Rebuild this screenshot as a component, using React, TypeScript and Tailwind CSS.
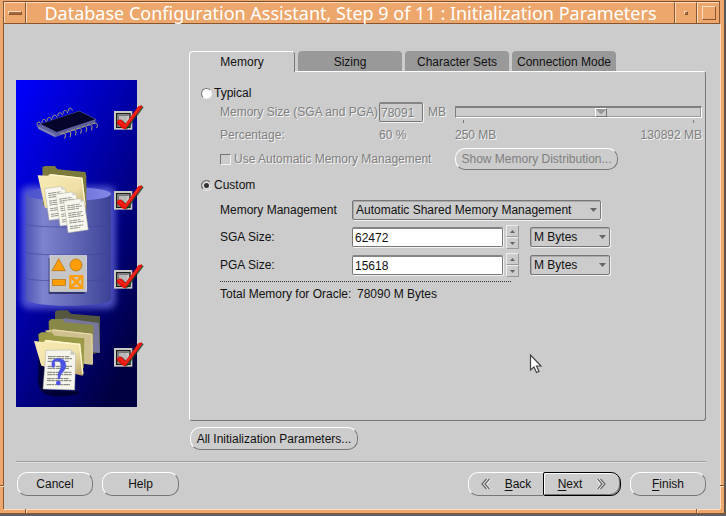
import { useState } from "react";
import type { ReactNode } from "react";

const etched = "text-[#808080] [text-shadow:1px_1px_0_#f4f4f4]";
const pill =
  "flex items-center justify-center rounded-[10px] border border-t-white border-l-white border-r-[#777] border-b-[#777]";
const sunken =
  "h-5 rounded-[2px] border border-[#777] border-t-2 border-t-[#858585] shadow-[1px_1px_0_#f2f2f2] outline-none";

function TitleBar() {
  return (
    <header className="flex h-6 border-t border-[#eda76d] bg-[#eda76d] pr-[6px] pl-[3px]">
      <div className="flex min-w-0 flex-1 border border-t-[#7c4b2c] border-r-[#8a5630] border-b-[#8a5630] border-l-[#8a5630]">
        <button
          type="button"
          aria-label="Window menu"
          className="flex w-[22px] items-center justify-center border-t border-l border-t-[#ffdcc0] border-l-[#ffdcc0] border-r border-r-[#8a5630]"
        >
          <span className="h-1 w-[14px] border border-t-[#ffdcc0] border-l-[#ffdcc0] border-r-[#8a5630] border-b-[#8a5630] bg-[#a5683f]" />
        </button>
        <h1 className="min-w-0 flex-1 border-t border-r border-l border-t-[#ffdcc0] border-r-[#8a5630] border-l-[#ffdcc0] text-center font-['Noto_Sans','Open_Sans',sans-serif] text-lg leading-5 font-normal whitespace-nowrap text-white">
          Database Configuration Assistant, Step 9 of 11 : Initialization Parameters
        </h1>
        <button
          type="button"
          aria-label="Minimize"
          className="flex w-[22px] items-center justify-center border-t border-r border-l border-t-[#ffdcc0] border-r-[#8a5630] border-l-[#ffdcc0]"
        >
          <span className="size-1 border border-t-[#ffdcc0] border-l-[#ffdcc0] border-r-[#8a5630] border-b-[#8a5630] bg-[#a5683f]" />
        </button>
        <button
          type="button"
          aria-label="Maximize"
          className="flex w-[22px] items-center justify-center border-t border-l border-t-[#ffdcc0] border-l-[#ffdcc0]"
        >
          <span className="size-[14px] border border-t-[#ffdcc0] border-l-[#ffdcc0] border-r-[#8a5630] border-b-[#8a5630]" />
        </button>
      </div>
    </header>
  );
}

function CheckMark({ x, y }: { x: number; y: number }) {
  return (
    <g transform={`translate(${x} ${y}) scale(.33333)`}>
      <rect width="55" height="56" fill="#cacac4" />
      <rect x="8" y="8" width="40" height="41" fill="#b9b9b9" stroke="#1c1c1c" strokeWidth="4" />
      <path d="M13 44V13h31" fill="none" stroke="#777" strokeWidth="4" />
      <path d="M42 15v28H15" fill="none" stroke="#d8d8d8" strokeWidth="3" />
      <path d="M12 32l12-5 13 12 38-52 8-3 6 5-46 62-8 5-27-17z" fill="#12401c" opacity=".8" />
      <path d="M8 31l10-6 5 2 11 12L73-14l10-3 2 5-44 58-7 9-7-2-17-14z" fill="#e8150f" />
      <path d="M15 31l19 15 42-56" fill="none" stroke="#ff4630" strokeWidth="2" />
    </g>
  );
}

function Page({ x, y }: { x: number; y: number }) {
  return (
    <g transform={`translate(${x} ${y}) rotate(-8)`}>
      <path d="M0 0h50l11 9v87H0z" fill="#f7f7ef" stroke="#b6b4a0" strokeWidth="1.5" />
      <path d="M50 0v10h11z" fill="#d2d0c2" />
      <path
        d="M8 16h38M8 22h44M8 28h34M8 39h43M8 45h38M8 51h44M8 62h34M8 68h43M8 79h40M8 85h30"
        stroke="#85857c"
        strokeWidth="2.5"
        strokeDasharray="9 1 14 2"
      />
    </g>
  );
}

function Illustration() {
  return (
    <svg
      width="128"
      height="327"
      viewBox="0 0 128 327"
      role="img"
      aria-label="Database setup progress"
      className="block shrink-0"
    >
      <defs>
        <linearGradient id="sky" x1="0" y1="0" x2=".75" y2="1">
          <stop offset="0" stopColor="#0000ff" />
          <stop offset=".4" stopColor="#0000b8" />
          <stop offset="1" stopColor="#000040" />
        </linearGradient>
        <linearGradient id="drum" x1="0" x2="1" y1="0" y2="0">
          <stop offset="0" stopColor="#5055b8" />
          <stop offset=".2" stopColor="#7d83cc" />
          <stop offset=".6" stopColor="#6066b4" />
          <stop offset="1" stopColor="#3c4196" />
        </linearGradient>
        <linearGradient id="lid" x1="0" x2="1">
          <stop offset="0" stopColor="#4a50cc" />
          <stop offset="1" stopColor="#8488e6" />
        </linearGradient>
        <linearGradient id="cream" x1="0" x2="1" y1="0" y2="1">
          <stop offset="0" stopColor="#f8ebb4" />
          <stop offset=".6" stopColor="#f0e0a8" />
          <stop offset="1" stopColor="#b69d64" />
        </linearGradient>
        <filter id="haze" x="-30%" y="-30%" width="160%" height="160%">
          <feGaussianBlur stdDeviation="3" />
        </filter>
        <clipPath id="frame">
          <rect width="121" height="327" />
        </clipPath>
      </defs>
      <g clipPath="url(#frame)">
        <rect width="121" height="327" fill="url(#sky)" />
        <rect x="5" y="106" width="95" height="123" rx="8" fill="#6a70e0" opacity=".7" filter="url(#haze)" />
        <path d="M10 114v105c0 9 85 9 85 0V114z" fill="url(#drum)" />
        <ellipse cx="52.5" cy="114" rx="42.5" ry="7" fill="url(#lid)" />
        <path
          d="M10 144c0 4 85 4 85 0M10 172c0 4 85 4 85 0M10 198c0 4 85 4 85 0"
          fill="none"
          stroke="#3f4499"
          opacity=".6"
        />
      </g>

      <g transform="translate(-6 -5) scale(.33333)">
        <path
          d="M82 152c-4-14 10-14 12-2m2-6c-2-13 11-14 13-3m3-4c-2-12 11-13 13-2m3-5c-2-12 11-13 13-2m3-5c-2-12 11-13 13-2m3-5c-2-12 11-13 13-2m3-5c-2-12 9-13 11-2"
          fill="none"
          stroke="#a9a470"
          strokeWidth="3"
        />
        <path d="M80 151l128-44 50 25-3 13-120 42-49-25z" fill="#5d5f9c" />
        <path d="M92 147l116-38 48 24-116 38z" fill="#05052c" />
        <path d="M82 153l54 26v7l-50-24z" fill="#8083bd" />
        <path
          d="M151 177c14-7 18 0 13 14m3-19c14-7 18 0 13 14m3-19c14-7 18 0 13 14m3-19c14-7 18 0 13 14m3-19c14-7 18 0 13 14m3-19c14-7 18 0 13 14m3-19c14-7 18 0 13 12"
          fill="none"
          stroke="#b5ae72"
          strokeWidth="3"
        />

        <path d="M97 277l8-4h30l7 10 84 8 3 12v102l-130-16z" fill="#7c7b3c" />
        <path d="M83 301l30 1 7-5 97 11 11 88-5 15-118-13z" fill="url(#cream)" />
        <path d="M120 299l96 11 9 80" fill="none" stroke="#fff6d4" strokeWidth="4" />
        <Page x={104} y={341} />
        <Page x={137} y={358} />
        <Page x={161} y={378} />
      </g>

      <g transform="translate(-6 160) scale(.33333)">
        <rect x="116" y="54" width="108" height="108" fill="#1c1f50" opacity=".7" />
        <rect x="120" y="47" width="110" height="107" fill="#c6c6c6" stroke="#e8e8e8" strokeWidth="2" />
        <path d="M126 92l20-36 20 36z" fill="#ff9d09" stroke="#b66b00" strokeWidth="2" />
        <circle cx="198" cy="75" r="18" fill="#ff9d09" stroke="#b66b00" strokeWidth="2" />
        <rect x="127" y="119" width="40" height="17" fill="#ff9d09" stroke="#b66b00" strokeWidth="2" />
        <rect x="181" y="108" width="36" height="36" fill="#d0c8b8" stroke="#ff9d09" strokeWidth="6" />
        <path d="M181 108l36 36m0-36l-36 36" fill="none" stroke="#ff9d09" strokeWidth="8" />

        <path d="M85 350l20-30v130l100 4v8c-80 16-130 10-120-60z" fill="#00001c" opacity=".7" />
        <path d="M135 215l8-4h30l10 10 87 8v108l-20 5-115-100z" fill="#55563f" />
        <path d="M142 240l25-5 99 14 4 90-24-4z" fill="#77779d" />
        <path d="M116 244l8-7h32l9 10 86 8-3 90-130-10z" fill="#878747" />
        <path d="M104 272l25-4 117 13 2 94-28-4z" fill="#cfc08f" />
        <path d="M130 270l116 13 1 88" fill="none" stroke="#eee0b1" strokeWidth="3" />
        <path d="M85 283l9-6h31l8 10 90 8-2 90-130-15z" fill="#9b9b48" />
        <path d="M72 303l28 3 8-7 102 12 11 90-3 6-124-30z" fill="url(#cream)" />
        <path d="M106 303l103 10 9 88" fill="none" stroke="#fff8cd" strokeWidth="4" />
        <path d="M108 331l75-1 14 14-3 106-95-3z" fill="#f5f5ec" stroke="#aaa" strokeWidth="1.5" />
        <path d="M183 330l-2 14h16z" fill="#cccabe" />
        <path
          d="M114 350h65M114 356h72M113 364h63M113 379h73M113 385h65M112 397h72M112 404h74M111 416h66M111 422h74M110 434h70"
          stroke="#77776f"
          strokeWidth="3"
          strokeDasharray="14 1 8 2"
        />
        <path
          d="M127 380c-5-20 6-24 19-24 17 0 22 11 21 22-1 18-18 18-17 38h-5c-4-22 9-24 8-39 0-10-4-15-11-15-8 0-9 5-8 10 2 9-5 13-7 8z"
          fill="#4a52e4"
          stroke="#4a52e4"
          strokeWidth="2"
        />
        <circle cx="145" cy="429" r="7" fill="#4a52e4" />
      </g>
      <CheckMark x={98} y={31} />
      <CheckMark x={98} y={111} />
      <CheckMark x={98} y={190} />
      <CheckMark x={98} y={268} />
    </svg>
  );
}

function Combo({ id, label, options, width }: { id: string; label?: string; options: string[]; width: string }) {
  return (
    <div className={`relative ${width}`}>
      <select
        id={id}
        aria-label={label}
        className="block h-5 w-full appearance-none rounded-[2px] border border-[#777] bg-[#ccc] pr-5 pl-[3px] leading-4 shadow-[1px_1px_0_#f2f2f2,inset_1px_1px_0_#aaa] outline-none"
      >
        {options.map((o) => (
          <option key={o}>{o}</option>
        ))}
      </select>
      <svg className="pointer-events-none absolute top-2 right-1 h-1 w-[7px]" viewBox="0 0 7 4" aria-hidden="true">
        <path d="M0 0h7L3.500 4z" fill="#666" />
      </svg>
    </div>
  );
}

function Spinner({ label }: { label: string }) {
  const half =
    "flex flex-1 items-center justify-center border border-t-[#eee] border-l-[#eee] border-r-[#999] border-b-[#999]";
  return (
    <div className="ml-[3px] flex h-6 w-[13px] flex-col">
      <button type="button" aria-label={`Increase ${label}`} className={half}>
        <svg width="5" height="3" viewBox="0 0 5 3">
          <path d="M0 3h5L2.500 0z" fill="#666" />
        </svg>
      </button>
      <button type="button" aria-label={`Decrease ${label}`} className={half}>
        <svg width="5" height="3" viewBox="0 0 5 3">
          <path d="M0 0h5L2.500 3z" fill="#666" />
        </svg>
      </button>
    </div>
  );
}

function SizeRow({ id, label, value }: { id: string; label: string; value: string }) {
  return (
    <div className="flex h-7 items-center">
      <label htmlFor={id} className="w-[132px]">
        {label}
      </label>
      <input id={id} defaultValue={value} className={`${sunken} w-[151px] bg-white px-[2px]`} />
      <Spinner label={label} />
      <div className="ml-[11px]">
        <Combo id={`${id}-unit`} label={`${label} unit`} options={["M Bytes", "G Bytes"]} width="w-20" />
      </div>
    </div>
  );
}

function ModeRadio({
  label,
  height,
  checked,
  onChange,
}: {
  label: string;
  height: string;
  checked: boolean;
  onChange: () => void;
}) {
  return (
    <label className={`flex items-center gap-[2px] pl-[11px] ${height}`}>
      <input
        type="radio"
        name="mode"
        checked={checked}
        onChange={onChange}
        className="size-[11px] appearance-none rounded-full border border-t-[#777] border-l-[#777] border-r-[#eee] border-b-[#eee] bg-white checked:bg-[#333] checked:shadow-[inset_0_0_0_2px_#ddd]"
      />
      {label}
    </label>
  );
}

function MemoryPanel() {
  const [mode, setMode] = useState("custom");
  return (
    <section
      role="tabpanel"
      aria-label="Memory"
      className="min-h-0 flex-1 rounded-b-[3px] rounded-tr-[3px] border border-t-white border-l-white border-r-[#777] border-b-[#777] pt-3"
    >
      <ModeRadio label="Typical" height="h-[18px]" checked={mode === "typical"} onChange={() => setMode("typical")} />
      <div className={`flex pr-[3px] pl-[30px] ${etched}`}>
        <div className="w-[235px] shrink-0">
          <div className="flex h-5 items-center">
            <label htmlFor="total" className="w-[159px] whitespace-nowrap">
              Memory Size (SGA and PGA):
            </label>
            <input
              id="total"
              disabled
              defaultValue="78091"
              className={`${sunken} w-11 bg-[#ccc] px-px [text-shadow:1px_1px_0_#f4f4f4]`}
            />
            <span className="ml-[5px]">MB</span>
          </div>
          <div className="flex h-[26px] items-center">
            <span className="w-[159px]">Percentage:</span>
            <span>60 %</span>
          </div>
        </div>
        <div className="min-w-0 flex-1 pt-1">
          <input
            type="range"
            aria-label="Memory size"
            disabled
            min={250}
            max={130892}
            defaultValue={78091}
            className="block h-3 w-full appearance-none border border-t-2 border-t-[#808080] border-l-[#808080] border-r-white border-b-white bg-[#ccc] shadow-[inset_-1px_-1px_0_#999] [&::-webkit-slider-thumb]:h-[9px] [&::-webkit-slider-thumb]:w-3 [&::-webkit-slider-thumb]:appearance-none [&::-webkit-slider-thumb]:border [&::-webkit-slider-thumb]:border-t-white [&::-webkit-slider-thumb]:border-r-[#777] [&::-webkit-slider-thumb]:border-b-[#777] [&::-webkit-slider-thumb]:border-l-white [&::-webkit-slider-thumb]:bg-[conic-gradient(from_-45deg_at_50%_80%,#999_90deg,#ccc_0)]"
          />
          <div className="mt-[2px] flex h-[3px] justify-between px-2">
            <span className="w-px bg-[#777]" />
            <span className="w-px bg-[#777]" />
          </div>
          <div className="flex h-6 items-center justify-between whitespace-nowrap">
            <span>250 MB</span>
            <span>130892 MB</span>
          </div>
        </div>
      </div>
      <div className={`flex h-[22px] items-center pl-[30px] ${etched}`}>
        <label className="flex w-[235px] items-center gap-[3px] whitespace-nowrap">
          <input
            type="checkbox"
            disabled
            className="size-[11px] shrink-0 appearance-none border border-t-[#777] border-l-[#777] border-r-[#f2f2f2] border-b-[#f2f2f2]"
          />
          Use Automatic Memory Management
        </label>
        <button type="button" disabled className={`${pill} h-[22px] w-[163px] whitespace-nowrap`}>
          Show Memory Distribution...
        </button>
      </div>
      <ModeRadio label="Custom" height="h-[30px]" checked={mode === "custom"} onChange={() => setMode("custom")} />
      <div className="pl-[30px]">
        <div className="mb-[3px] flex h-5 items-center">
          <label htmlFor="management" className="w-[132px]">
            Memory Management
          </label>
          <Combo
            id="management"
            options={["Automatic Shared Memory Management", "Manual Shared Memory Management"]}
            width="w-[249px]"
          />
        </div>
        <SizeRow id="sga" label="SGA Size:" value="62472" />
        <SizeRow id="pga" label="PGA Size:" value="15618" />
        <hr className="mt-[2px] w-[291px] border-0 border-t border-dotted border-[#333]" />
        <p className="flex h-6 items-center gap-[5px]">
          <span className="w-[132px]">Total Memory for Oracle:</span>
          <span>78090 M Bytes</span>
        </p>
      </div>
    </section>
  );
}

function Tabs() {
  const base = "h-5 w-[104px] whitespace-nowrap pt-[2px]";
  return (
    <div role="tablist" className="flex gap-[3px]">
      <button
        type="button"
        role="tab"
        aria-selected="true"
        className="relative z-10 -mb-px h-[21px] w-[106px] rounded-t-[4px] border border-b-0 border-t-white border-l-white border-r-[#777] bg-[#ccc]"
      >
        Memory
      </button>
      {["Sizing", "Character Sets", "Connection Mode"].map((t) => (
        <button key={t} type="button" role="tab" aria-selected="false" className={`${base} rounded-t-[4px] bg-[#999]`}>
          {t}
        </button>
      ))}
    </div>
  );
}

function Chevrons({ flip }: { flip?: boolean }) {
  return (
    <svg
      width="10"
      height="12"
      viewBox="0 0 10 12"
      fill="none"
      aria-hidden="true"
      className={flip ? "-scale-x-100" : ""}
    >
      <path d="M6.500 1.500L2.500 6.500l4 4.500M9.500 1.500L5.500 6.500l4 4.500" stroke="#fff" />
      <path d="M5.500 1L1 6l4.500 5M8.500 1L4 6l4.500 5" stroke="#6a6a6a" strokeWidth="1.200" />
    </svg>
  );
}

function Mnemonic({ children }: { children: string }) {
  return (
    <span>
      <span className="underline underline-offset-2">{children[0]}</span>
      {children.slice(1)}
    </span>
  );
}

function NavButton({ className, children }: { className: string; children: ReactNode }) {
  return (
    <button type="button" className={`h-6 ${className}`}>
      {children}
    </button>
  );
}

function Cursor() {
  return (
    <svg className="pointer-events-none absolute top-[354px] left-[529px]" width="14" height="20" viewBox="0 0 14 20" aria-hidden="true">
      <path d="M1.500 1v15l3.500-3 2.500 5.500 2.500-1-2.500-5.500h4.500z" fill="#fff" stroke="#444" strokeWidth="1.200" />
    </svg>
  );
}

export default function App() {
  return (
    <div className="relative flex min-h-screen w-full flex-col bg-[#eda76d] font-['Liberation_Sans',Arial,sans-serif] text-xs text-[#111]">
      <TitleBar />
      <main className="flex flex-1 flex-col border-r-[6px] border-b-[7px] border-l-4 border-[#eda76d] bg-[#ccc]">
        <div className="flex flex-1 flex-col pt-[27px] pr-[14px] pb-[13px] pl-3 shadow-[-1px_0_0_#8a5630,1px_0_0_#ffdcc0,0_1px_0_#ffdcc0]">
          <div className="flex flex-1">
            <div className="w-[173px] shrink-0 pt-[29px]">
              <Illustration />
            </div>
            <div className="flex min-w-0 flex-1 flex-col">
              <Tabs />
              <MemoryPanel />
              <button type="button" className={`${pill} mt-[6px] ml-px h-[23px] w-[168px] whitespace-nowrap`}>
                All Initialization Parameters...
              </button>
            </div>
          </div>
          <hr className="mt-[11px] h-[2px] border-0 border-t border-[#a0a0a0] bg-[#ddd]" />
          <footer className="mt-[9px] flex justify-between">
            <div className="flex gap-[9px] pl-px">
              <NavButton className={`${pill} w-[76px]`}>Cancel</NavButton>
              <NavButton className={`${pill} w-[77px]`}>Help</NavButton>
            </div>
            <div className="flex">
              <NavButton className={`${pill} w-[75px] gap-[14px] rounded-r-none border-r-0`}>
                <Chevrons />
                <Mnemonic>Back</Mnemonic>
              </NavButton>
              <NavButton className="flex w-[78px] items-center justify-center gap-[14px] rounded-l-[2px] rounded-r-[10px] border border-black shadow-[inset_1px_1px_0_#fff,inset_-1px_-1px_0_#777]">
                <Mnemonic>Next</Mnemonic>
                <Chevrons flip />
              </NavButton>
              <NavButton className={`${pill} ml-[9px] w-[76px]`}>
                <Mnemonic>Finish</Mnemonic>
              </NavButton>
            </div>
          </footer>
        </div>
      </main>
      <div className="pointer-events-none absolute inset-y-0 right-0 w-[2px] bg-[#5e5450]" />
      <div className="pointer-events-none absolute inset-x-0 bottom-0 h-[3px] border-t border-[#8a5630] bg-[#5f6066]" />
      <div className="pointer-events-none absolute bottom-[29px] left-0 h-[2px] w-1 border-t border-[#8a5630] bg-[#ffdcc0]" />
      <div className="pointer-events-none absolute right-[2px] bottom-[29px] h-[2px] w-1 border-t border-[#8a5630] bg-[#ffdcc0]" />
      <div className="pointer-events-none absolute bottom-[3px] left-[25px] h-1 w-[2px] border-l border-[#8a5630] bg-[#ffdcc0]" />
      <div className="pointer-events-none absolute right-[28px] bottom-[3px] h-1 w-[2px] border-l border-[#8a5630] bg-[#ffdcc0]" />
      <Cursor />
    </div>
  );
}
